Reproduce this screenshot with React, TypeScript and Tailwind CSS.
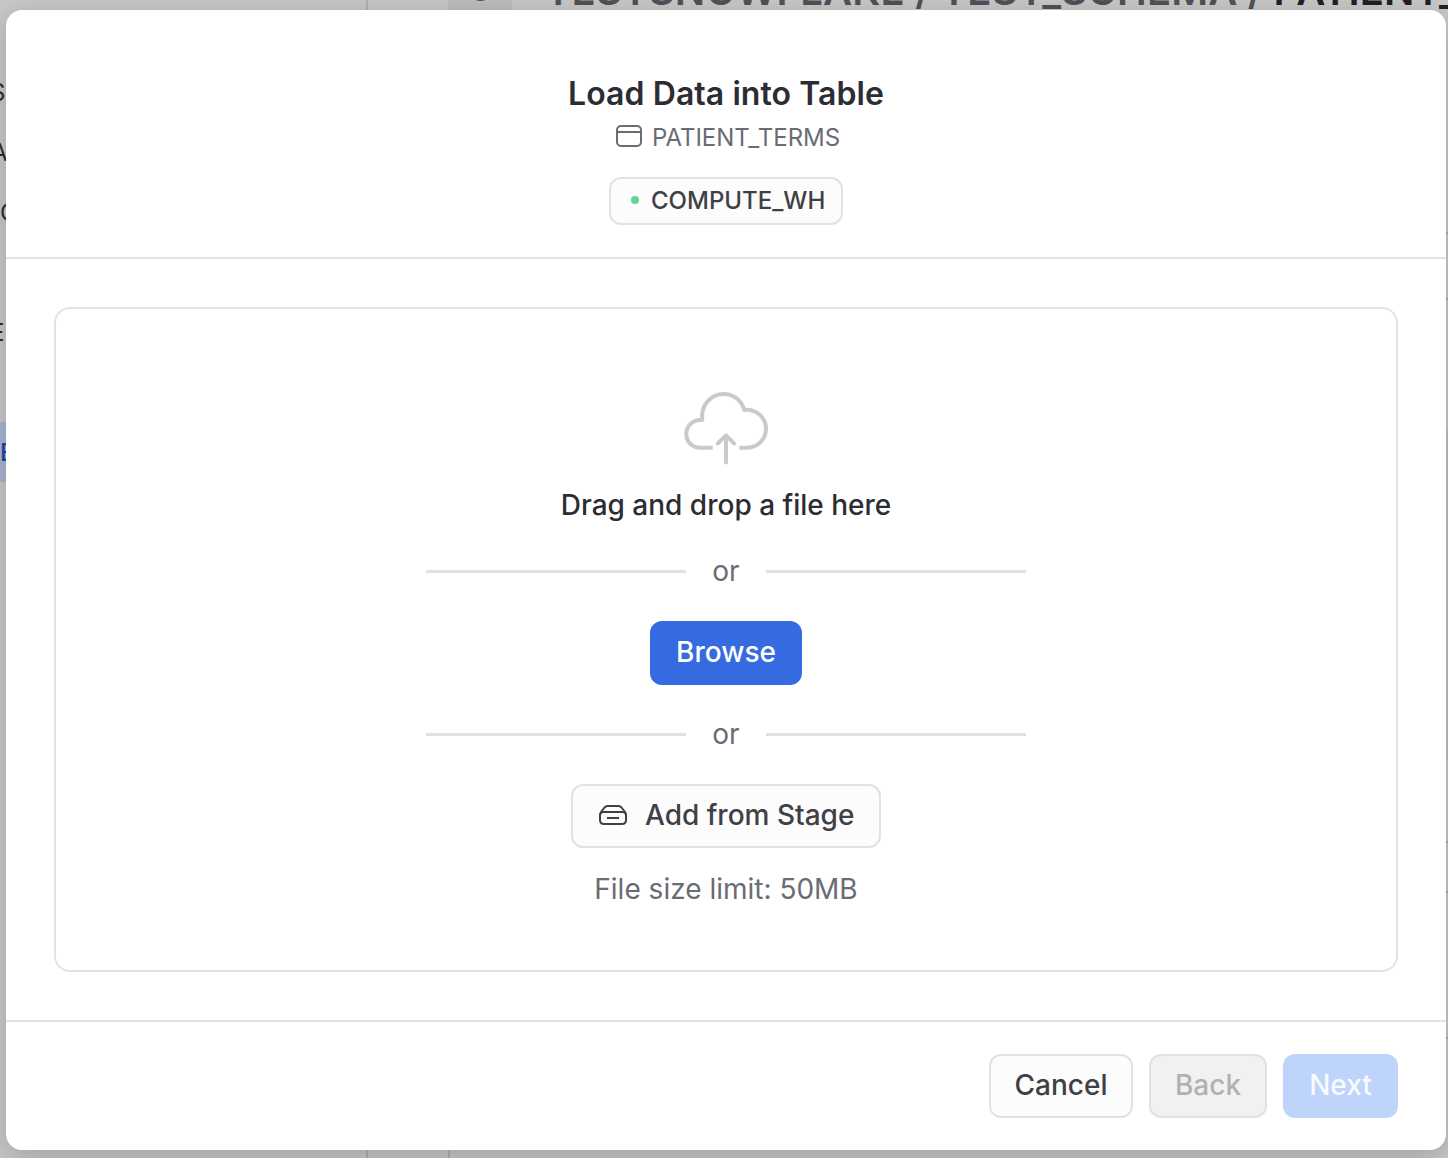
import React from "react";

const font = { fontFamily: 'Inter, "Liberation Sans", sans-serif' };

function CloudUpload() {
  return (
    <svg width="88" height="76" viewBox="682 390 88 76" fill="none" stroke="#c9cacd" strokeWidth="4">
      <path d="M712.7 447.7H700C692 447.7 686.3 441.3 686.3 433.9C686.3 426.3 692.3 420.3 700 420.1H702.2V415.6C702.2 403.6 711.9 394 723.7 394C733.4 394 741.7 400.5 744.2 409.9C756.6 408.9 766 417.8 766 428.8C766 439.3 757.6 447.7 747.3 447.7H739.3" strokeLinejoin="round" />
      <path d="M726 435.5V462.5M717.8 443.5L726 435.3L734.2 443.5" strokeLinecap="round" strokeLinejoin="round" />
    </svg>
  );
}

function TableIcon() {
  return (
    <svg className="-mt-[4px]" width="26" height="22" viewBox="0 0 26 22" fill="none" stroke="#6a6c73" strokeWidth="2">
      <rect x="1" y="1" width="24" height="20" rx="4" />
      <path d="M1 7H25" />
    </svg>
  );
}

function StageIcon() {
  return (
    <svg className="-mt-[2px]" width="28" height="20" viewBox="0 0 28 20" fill="none" stroke="#3f4045" strokeWidth="2" strokeLinejoin="round">
      <path d="M1 9.800C1 8.600 1.300 7.900 2 7L5.500 2.500C6.400 1.400 7.200 1 8.500 1H19.500C20.800 1 21.600 1.400 22.500 2.500L26 7C26.700 7.900 27 8.600 27 9.800V15C27 17.600 25.600 19 23 19H5C2.400 19 1 17.600 1 15Z" />
      <path d="M1.500 9C2 7.700 3 7 4.500 7H23.500C25 7 26 7.700 26.500 9" />
      <path d="M8 13H20" />
    </svg>
  );
}

function Divider() {
  return (
    <div className="flex h-[34px] w-[600px] items-center justify-between">
      <div className="h-[3px] w-[260px] bg-[#e2e2e4]" />
      <span className="text-[28px] leading-[34px] text-[#6a6c73]">or</span>
      <div className="h-[3px] w-[260px] bg-[#e2e2e4]" />
    </div>
  );
}

function Backdrop() {
  return (
    <div className="flex h-full w-full bg-[#c8c8c8]">
      <aside className="relative h-full w-[368px] shrink-0 border-r-2 border-[#b0b0b0] text-[24px] leading-[30px] text-[#2b2c30]">
        <span className="absolute top-[78px] -left-[10px]">S</span>
        <span className="absolute top-[138px] -left-[9px]">A</span>
        <span className="absolute top-[198px] left-0">C</span>
        <span className="absolute top-[318px] -left-[10px]">E</span>
        <div className="absolute top-[422px] left-0 h-[60px] w-full bg-[#a9b6cf]" />
        <span className="absolute top-[438px] left-0 font-medium text-[#1d44a8]">E</span>
      </aside>
      <div className="h-full w-[82px] shrink-0 border-r-2 border-[#b0b0b0]" />
      <main className="relative h-full flex-1">
        <div className="absolute top-0 -left-[2px] h-[40px] w-[64px] bg-[#bdbdbd]" />
        <div className="absolute -top-[22px] left-[19px] h-[23px] w-[23px] rounded-full bg-[#4d4f55]" />
        <div className="absolute -top-[34px] left-[95px] text-[40px] leading-[50px] font-semibold tracking-[0.16px] whitespace-nowrap text-[#505257]">
          TESTSNOWFLAKE / TEST_SCHEMA / <span className="text-[#202126]">PATIENT_TERMS</span>
        </div>
        <div className="absolute top-[232px] right-0 h-[68px] w-[20px] border-y-2 border-[#aaaaaa]" />
        <div className="absolute top-[430px] right-0 h-[331px] w-[20px] bg-[#bfbfbf]" />
        <div className="absolute top-[841px] right-0 h-[52px] w-[20px] border-y-2 border-[#aaaaaa]" />
        <div className="absolute top-[1037px] right-0 h-[2px] w-[20px] bg-[#aaaaaa]" />
      </main>
    </div>
  );
}

export default function App() {
  return (
    <div className="relative h-[1158px] w-[1448px] overflow-hidden" style={font}>
      <Backdrop />
      <section
        role="dialog"
        className="absolute top-[10px] left-[6px] flex h-[1140px] w-[1440px] flex-col rounded-[16px] bg-white shadow-[0_8px_32px_rgba(0,0,0,0.2)]"
      >
        <header className="flex h-[249px] shrink-0 flex-col items-center border-b-2 border-[#e2e2e4] pt-[64px]">
          <h1 className="text-[32px] leading-[40px] font-semibold tracking-[0.06px] text-[#2c2d33]">Load Data into Table</h1>
          <div className="mt-[8px] flex h-[32px] items-center gap-[10px] pl-[4px]">
            <TableIcon />
            <span className="text-[24px] leading-[32px] tracking-[-0.05px] text-[#6a6c73]">PATIENT_TERMS</span>
          </div>
          <div className="mt-[23px] flex h-[48px] w-[234px] items-center rounded-[12px] border-2 border-[#e2e2e4] bg-[#fcfcfc] pl-[20px]">
            <span className="-mt-[2px] size-[8px] rounded-full bg-[#5fd39b]" />
            <span className="ml-[12px] text-[24px] leading-[32px] font-medium text-[#3f4045]">COMPUTE_WH</span>
          </div>
        </header>

        <div className="flex-1 p-[48px]">
          <div className="flex h-[665px] flex-col items-center rounded-[16px] border-2 border-[#e2e2e4] pt-[81px]">
            <CloudUpload />
            <p className="mt-[22px] text-[28px] leading-[34px] font-medium text-[#2c2d33]">Drag and drop a file here</p>
            <div className="mt-[32px]">
              <Divider />
            </div>
            <button className="mt-[33px] h-[64px] w-[152px] rounded-[12px] bg-[#356ae0] pb-[2px] text-[28px] font-medium text-white">
              Browse
            </button>
            <div className="mt-[32px]">
              <Divider />
            </div>
            <button className="mt-[33px] flex h-[64px] w-[310px] items-center rounded-[12px] border-2 border-[#e2e2e4] bg-[#fcfcfc] pl-[26px] text-[28px] font-medium text-[#3f4045]">
              <StageIcon />
              <span className="ml-[18px] pb-[2px]">Add from Stage</span>
            </button>
            <p className="mt-[24px] text-[28px] leading-[34px] text-[#6a6c73]">File size limit: 50MB</p>
          </div>
        </div>

        <footer className="flex h-[130px] shrink-0 items-start justify-end gap-[16px] border-t-2 border-[#e2e2e4] px-[48px] pt-[32px] text-[28px] font-medium">
          <button className="h-[64px] w-[144px] rounded-[12px] border-2 border-[#e2e2e4] bg-[#fcfcfc] pb-[2px] text-[#3f4045]">Cancel</button>
          <button className="h-[64px] w-[118px] rounded-[12px] border-2 border-[#e2e2e4] bg-[#f1f1f1] pb-[2px] text-[#b0b1b5]">Back</button>
          <button className="h-[64px] w-[115px] rounded-[12px] bg-[#bfd4fb] pb-[2px] text-[#f8fafe]">Next</button>
        </footer>
      </section>
    </div>
  );
}
